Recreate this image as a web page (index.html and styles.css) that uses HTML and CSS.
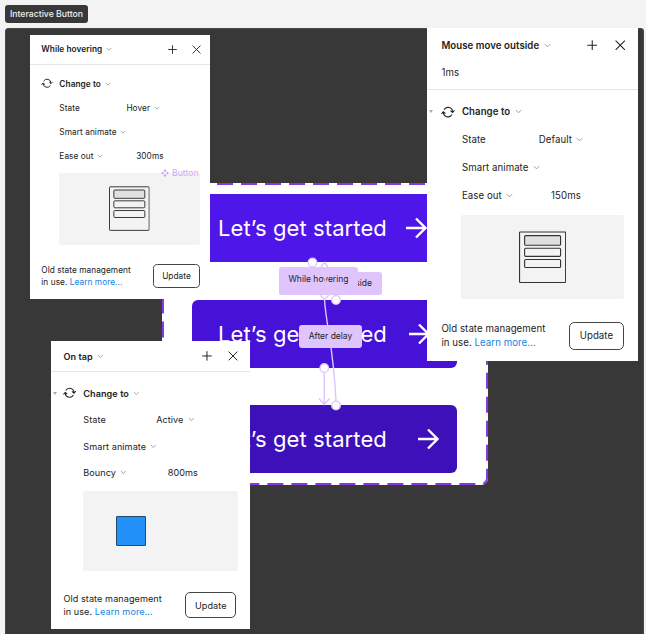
FILE: index.html
```html
<!DOCTYPE html>
<html lang="en">
<head>
<meta charset="utf-8">
<title>Interactive Button</title>
<link rel="stylesheet" href="styles.css">
</head>
<body>
<svg class="defs" aria-hidden="true">
  <symbol id="chev" viewBox="0 0 8 8"><path d="M1 2.5 4 5.5 7 2.5" fill="none" stroke="#999" stroke-width="1.100"/></symbol>
  <symbol id="plus" viewBox="0 0 12 12"><path d="M6 .3v11.4M.3 6h11.4" fill="none" stroke="#222" stroke-width="1.2"/></symbol>
  <symbol id="close" viewBox="0 0 12 12"><path d="M.7.7l10.6 10.6M11.3.7.7 11.3" fill="none" stroke="#222" stroke-width="1.2"/></symbol>
  <symbol id="swap" viewBox="0 0 14 12"><path d="M3 3.6A4.6 4.6 0 0 1 11.6 6M11 8.4A4.6 4.6 0 0 1 2.4 6M.5 7.7 2.4 5.6 4.5 7.5M9.5 4.5l2.1 1.9 1.9-2.1" fill="none" stroke="#222" stroke-width="1.1"/></symbol>
  <symbol id="arrow" viewBox="0 0 22 22"><path d="M1 11h19M11 1.5l9.5 9.5-9.5 9.5" fill="none" stroke="#fff" stroke-width="2.4"/></symbol>
  <symbol id="stack" viewBox="0 0 42 46">
    <g fill="none" stroke="#333" stroke-width="1"><rect x=".5" y=".5" width="41" height="45" rx=".6"/><rect x="5" y="3.8" width="32" height="8.6" rx="1" fill="#e0e0e0"/><rect x="5" y="15" width="32" height="7.2" rx="1"/><rect x="5" y="25" width="32" height="7.2" rx="1"/></g>
  </symbol>
</svg>

<div class="tag">Interactive Button</div>
<main class="frame"></main>

<section class="set">
  <svg class="outline" width="326" height="302"><rect x="1" y="1" width="324" height="300" rx="6"/></svg>
  <div class="btn default"><span>Let’s get started</span><svg class="arrow"><use href="#arrow"/></svg></div>
  <div class="btn hover"><span>Let’s get started</span><svg class="arrow"><use href="#arrow"/></svg></div>
  <div class="btn active"><span>Let’s get started</span><svg class="arrow"><use href="#arrow"/></svg></div>
</section>

<article class="panel p-hover">
  <header><div class="trigger"><b>While hovering</b><svg class="chev"><use href="#chev"/></svg><svg class="ic"><use href="#plus"/></svg><svg class="ic"><use href="#close"/></svg></div></header>
  <div class="row action"><svg class="swap"><use href="#swap"/></svg><b>Change to</b><svg class="chev"><use href="#chev"/></svg></div>
  <div class="row"><span class="key">State</span><span>Hover</span><svg class="chev"><use href="#chev"/></svg></div>
  <div class="row"><span>Smart animate</span><svg class="chev"><use href="#chev"/></svg></div>
  <div class="row"><span class="key ease">Ease out<svg class="chev"><use href="#chev"/></svg></span><span>300ms</span></div>
  <div class="preview"><svg class="stack"><use href="#stack"/></svg></div>
  <footer><p>Old state management<br>in use. <a>Learn more...</a></p><button>Update</button></footer>
</article>

<article class="panel p-tap">
  <header><div class="trigger"><b>On tap</b><svg class="chev"><use href="#chev"/></svg><svg class="ic"><use href="#plus"/></svg><svg class="ic"><use href="#close"/></svg></div></header>
  <div class="row action"><i class="caret"></i><svg class="swap"><use href="#swap"/></svg><b>Change to</b><svg class="chev"><use href="#chev"/></svg></div>
  <div class="row"><span class="key">State</span><span>Active</span><svg class="chev"><use href="#chev"/></svg></div>
  <div class="row"><span>Smart animate</span><svg class="chev"><use href="#chev"/></svg></div>
  <div class="row"><span class="key ease">Bouncy<svg class="chev"><use href="#chev"/></svg></span><span>800ms</span></div>
  <div class="preview"><i class="square"></i></div>
  <footer><p>Old state management<br>in use. <a>Learn more...</a></p><button>Update</button></footer>
</article>

<article class="panel p-out">
  <header><div class="trigger"><b>Mouse move outside</b><svg class="chev"><use href="#chev"/></svg><svg class="ic"><use href="#plus"/></svg><svg class="ic"><use href="#close"/></svg></div><div class="delay">1ms</div></header>
  <div class="row action"><i class="caret"></i><svg class="swap"><use href="#swap"/></svg><b>Change to</b><svg class="chev"><use href="#chev"/></svg></div>
  <div class="row"><span class="key">State</span><span>Default</span><svg class="chev"><use href="#chev"/></svg></div>
  <div class="row"><span>Smart animate</span><svg class="chev"><use href="#chev"/></svg></div>
  <div class="row"><span class="key ease">Ease out<svg class="chev"><use href="#chev"/></svg></span><span>150ms</span></div>
  <div class="preview"><svg class="stack"><use href="#stack"/></svg></div>
  <footer><p>Old state management<br>in use. <a>Learn more...</a></p><button>Update</button></footer>
</article>

<div class="component"><svg viewBox="0 0 10 10"><path d="M5 0 7 2 5 4 3 2ZM5 6 7 8 5 10 3 8ZM2 3 4 5 2 7 0 5ZM8 3l2 2-2 2-2-2Z"/></svg>Button</div>

<div class="note outside">side</div>
<div class="note hovering">While hovering</div>
<svg class="wires" width="60" height="160" viewBox="300 255 60 160">
  <path d="M321 267l3.500-4.500 3.500 4.500M320 295l4.500 4.500 4.500-4.500M324 275l2.500 9M324.500 299.500C326 325 334 350 336 402M324.300 371v33M319 398.500l5.300 6 5.300-6"/>
  <g><circle cx="312.500" cy="262.500" r="4.300"/><circle cx="336" cy="300" r="4.300"/><circle cx="324.300" cy="368" r="4.300"/><circle cx="336" cy="405.500" r="4.300"/></g>
</svg>
<div class="note after">After delay</div>
</body>
</html>
```
FILE: styles.css
```css
* { box-sizing: border-box; }
body {
  margin: 0;
  height: 634px;
  position: relative;
  overflow: hidden;
  background: #f3f3f3;
  font-family: Inter, "Liberation Sans", sans-serif;
  color: #222;
}
.defs { position: absolute; width: 0; height: 0; }
.tag {
  width: 83px;
  height: 18px;
  margin: 5px 0 0 5px;
  border-radius: 3px;
  background: #383838;
  color: #f2f2f2;
  font-size: 8.7px;
  font-weight: 500;
  line-height: 18px;
  text-align: center;
  white-space: nowrap;
}
.frame {
  height: 620px;
  margin: 5px 2px 0 5px;
  border: 1px solid #4a4a4a;
  border-radius: 3px;
  background: #383838;
}

/* Component set */
.set {
  position: absolute;
  left: 162px;
  top: 183px;
  width: 326px;
  height: 302px;
  padding: 11px 30px;
  display: flex;
  flex-direction: column;
  gap: 37.600px;
  border-radius: 7px;
  background: #fff;
}
.outline { position: absolute; left: 0; top: 0; }
.outline rect { fill: none; stroke: #8638e5; stroke-width: 2; stroke-dasharray: 16 8; }
.btn {
  width: 265px;
  height: 68px;
  flex: none;
  display: flex;
  align-items: center;
  justify-content: space-between;
  padding: 0 18px 0 26px;
  border-radius: 6px;
  color: #fff;
  font-size: 22px;
  letter-spacing: .1px;
  white-space: nowrap;
}
.default { background: #4f16e9; padding-right: 30px; }
.hover { background: #4612d8; padding-right: 27px; }
.active { background: #3e10b9; }
.arrow { width: 22px; height: 22px; }

.panel {
  position: absolute;
  width: calc(var(--u) * 240);
  background: #fff;
  font-size: calc(var(--u) * 11);
  letter-spacing: .008em;
}
.p-hover { --u: .753px; --head: 40; left: 30px; top: 34.700px; width: 180px; }
.p-tap { --u: .828px; --head: 38; left: 51px; top: 341px; }
.p-out { --u: .874px; --head: 71; left: 427px; top: 28px; width: 210.500px; }
.panel b { font-weight: 600; }
.panel header {
  height: calc(var(--u) * var(--head));
  padding: 0 calc(var(--u) * 14) 0 calc(var(--u) * 15);
  border-bottom: 1px solid #e5e5e5;
  margin-bottom: calc(var(--u) * 9);
}
.p-hover header { padding-right: calc(var(--u) * 12); }
.p-out header { padding-left: calc(var(--u) * 16.500); }
.trigger { display: flex; align-items: center; height: calc(var(--u) * 37); }
.p-hover .trigger { height: calc(var(--u) * 39); }
.p-out .trigger { height: calc(var(--u) * 39); }
.delay { line-height: calc(var(--u) * 26); }
.chev { width: calc(var(--u) * 8); height: calc(var(--u) * 8); margin-left: calc(var(--u) * 5); flex: none; }
.ic { width: calc(var(--u) * 12); height: calc(var(--u) * 12); margin-left: calc(var(--u) * 20); }
.chev + .ic { margin-left: auto; }
.row {
  height: calc(var(--u) * 32);
  padding-left: calc(var(--u) * 39);
  display: flex;
  align-items: center;
}
.action { padding-left: calc(var(--u) * 15); position: relative; }
.p-out .row { padding-left: calc(var(--u) * 40); }
.p-out .action { padding-left: calc(var(--u) * 16); }
.swap { width: calc(var(--u) * 16); height: calc(var(--u) * 14); margin-right: calc(var(--u) * 8); }
.caret {
  position: absolute;
  left: calc(var(--u) * 2);
  border: calc(var(--u) * 3) solid transparent;
  border-top: calc(var(--u) * 4) solid #aaa;
  border-bottom: 0;
}
.key { width: calc(var(--u) * 88); display: flex; align-items: center; }
.p-hover .key { width: calc(var(--u) * 89); }
.key.ease, .p-hover .key.ease { width: calc(var(--u) * 102); }
.preview {
  width: calc(var(--u) * 187);
  height: calc(var(--u) * 96);
  margin: calc(var(--u) * 6.500) 0 0 calc(var(--u) * 38.500);
  display: flex;
  align-items: center;
  justify-content: center;
  border-radius: 2px;
  background: #f3f3f3;
}
.stack { width: calc(var(--u) * 54); height: calc(var(--u) * 60); }
.square {
  width: 30px;
  height: 30px;
  margin-right: 58px;
  border: 1px solid #24486b;
  border-radius: 1px;
  background: #2190f7;
}
.panel footer {
  height: calc(var(--u) * 71);
  padding: calc(var(--u) * 12) calc(var(--u) * 16) 0 calc(var(--u) * 15);
  display: flex;
  align-items: center;
  justify-content: space-between;
}
.p-hover footer { padding-right: calc(var(--u) * 13.500); }
.p-out footer { padding-left: calc(var(--u) * 16.500); }
.panel p { margin: 0; line-height: calc(var(--u) * 16); white-space: nowrap; }
.panel a { color: #1483e6; }
.panel button {
  width: calc(var(--u) * 62);
  height: calc(var(--u) * 32);
  padding: 0;
  border: 1px solid #444;
  border-radius: calc(var(--u) * 6);
  background: #fff;
  color: inherit;
  font: inherit;
  letter-spacing: inherit;
}

/* Canvas annotations */
.component {
  position: absolute;
  left: 161px;
  top: 168px;
  display: flex;
  align-items: center;
  gap: 3px;
  color: #d0a8f8;
  font-size: 8.700px;
  line-height: 10px;
}
.component svg { width: 8px; height: 8px; fill: #d0a8f8; }
.note {
  position: absolute;
  border-radius: 3px;
  background: #dfc5fb;
  font-size: 8.500px;
  text-align: center;
  white-space: nowrap;
}
.hovering { left: 279px; top: 267px; width: 79px; height: 28px; line-height: 24px; }
.outside { left: 279px; top: 272px; width: 103px; height: 23px; line-height: 23px; text-align: right; padding-right: 10px; }
.after { left: 299px; top: 325px; width: 63px; height: 23px; line-height: 23px; }
.wires { position: absolute; left: 300px; top: 255px; }
.wires path { fill: none; stroke: #dfc5fb; stroke-width: 1.400; }
.wires circle { fill: #fff; stroke: #dfc5fb; stroke-width: 1.300; }
```
